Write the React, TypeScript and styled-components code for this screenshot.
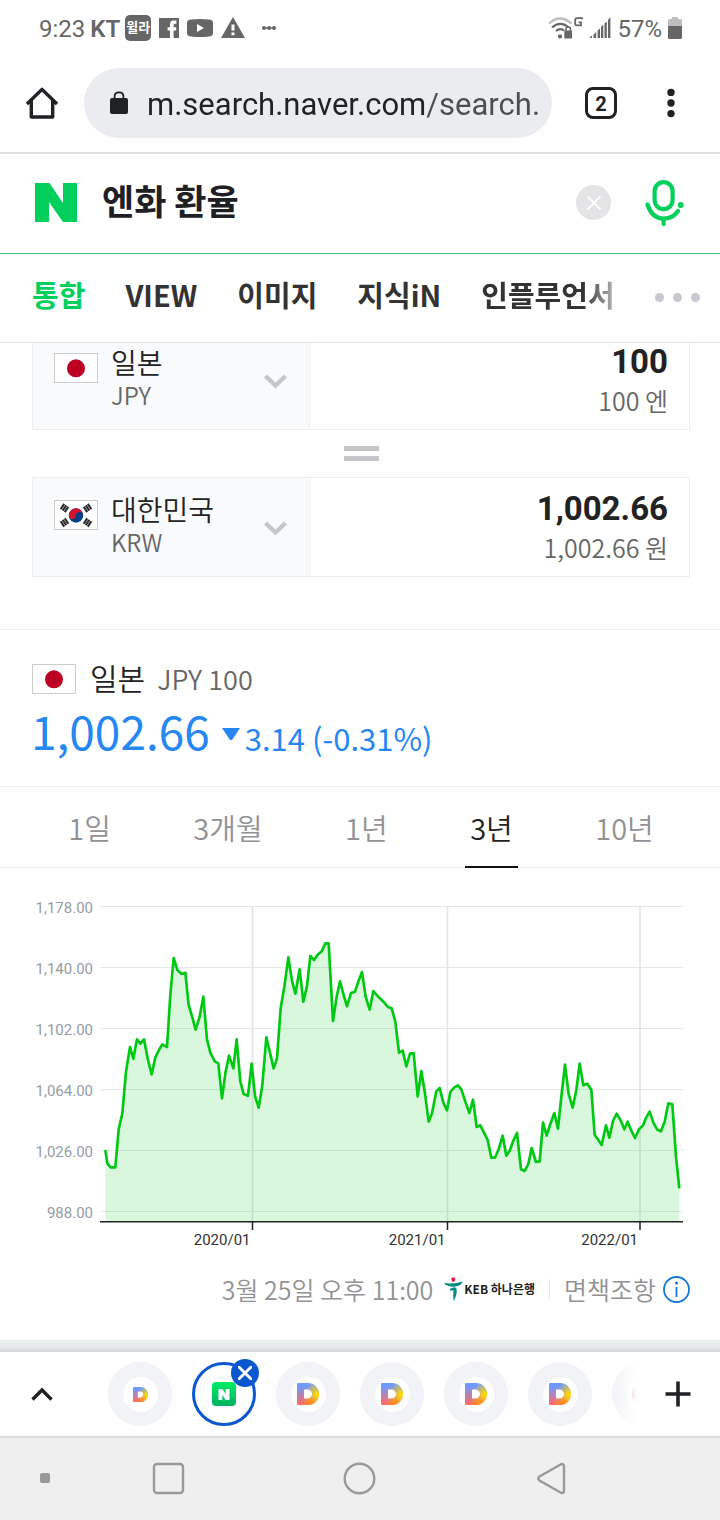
import React, { useState } from "react";
import styled, { createGlobalStyle, css } from "styled-components";

const GlobalStyle = createGlobalStyle`
  * { box-sizing: border-box; }
  body { margin: 0; background: #fff; }
  button, input, select { font: inherit; color: inherit; margin: 0; padding: 0; border: 0; background: none; outline: none; }
  button { display: flex; align-items: center; justify-content: center; cursor: pointer; }
  svg { display: block; flex: none; }
  a { color: inherit; text-decoration: none; }
`;

const kr = `"Noto Sans CJK KR", sans-serif`;
const roboto = `Roboto, "Noto Sans CJK KR", sans-serif`;

const Page = styled.div`
  display: flex;
  flex-direction: column;
  min-height: 100vh;
  overflow: hidden;
  font-family: ${kr};
  color: #222;
`;

/* ---------- system status bar ---------- */

const StatusBar = styled.header`
  display: flex;
  align-items: center;
  justify-content: space-between;
  height: 56px;
  padding: 0 38px 0 39px;
  font: 400 24px/28px ${roboto};
  color: #666;
`;

const StatusGroup = styled.div<{ $gap: number }>`
  display: flex;
  align-items: center;
  gap: ${(p) => p.$gap}px;
`;

const StatusText = styled.span<{ $bold?: boolean }>`
  padding-top: 2px;
  font-weight: ${(p) => (p.$bold ? 600 : 400)};
`;

const AppBadge = styled.span`
  width: 26px;
  height: 26px;
  border-radius: 5px;
  background: #666;
  color: #fff;
  font: 700 13px/24px ${kr};
  text-align: center;
  white-space: nowrap;
`;

/* ---------- browser bar ---------- */

const BrowserBar = styled.div`
  display: flex;
  align-items: center;
  height: 98px;
  padding: 12px 14px 14px 0;
  border-bottom: 2px solid #e0e0e0;
`;

const BarButton = styled.button<{ $width: number }>`
  flex: none;
  width: ${(p) => p.$width}px;
  height: 70px;
`;

const Omnibox = styled.label`
  flex: 1;
  min-width: 0;
  display: flex;
  align-items: center;
  gap: 19px;
  height: 70px;
  margin-right: 14px;
  padding: 0 10px 0 26px;
  border-radius: 35px;
  background: #ebecf0;
`;

const UrlInput = styled.input`
  flex: 1;
  min-width: 0;
  height: 46px;
  padding-top: 2px;
  font: 400 31px/42px ${roboto};
  color: transparent;
  background: linear-gradient(90deg, #202124 279px, #4c4d50 279px);
  background-clip: text;
  -webkit-background-clip: text;
`;

const TabCount = styled.span`
  display: block;
  width: 32px;
  height: 32px;
  border: 3px solid #202124;
  border-radius: 8px;
  font: 700 20px/28px ${roboto};
  color: #202124;
`;

/* ---------- search header ---------- */

const SearchForm = styled.form`
  display: flex;
  align-items: center;
  height: 100px;
  padding: 0 36px 2px 35px;
  border-bottom: 1px solid #2fcb78;
`;

const QueryInput = styled.input`
  flex: 1;
  min-width: 0;
  height: 54px;
  margin-left: 25px;
  padding-bottom: 6px;
  font: 700 35px/48px ${kr};
  color: #202024;
`;

const ClearButton = styled.button`
  width: 35px;
  height: 35px;
  margin-right: 34px;
  border-radius: 50%;
  background: #e4e4e6;
`;

const SearchTabs = styled.nav`
  display: flex;
  align-items: center;
  height: 89px;
  padding: 0 20px 8px 32px;
  border-bottom: 1px solid #dfe2e6;
  font: 700 29px/40px ${kr};
  color: #333;
`;

const TabList = styled.div`
  flex: 1;
  min-width: 0;
  display: flex;
  gap: 40px;
  overflow: hidden;
  white-space: nowrap;
`;

const SearchTab = styled.a<{ $active?: boolean; $fading?: boolean }>`
  ${(p) => p.$active && css`color: #03cf5d;`}
  ${(p) =>
    p.$fading &&
    css`
      mask-image: linear-gradient(90deg, #000 76%, rgba(0, 0, 0, 0.35));
    `}
`;

const MoreButton = styled.button`
  gap: 9px;
  height: 40px;
  padding-top: 6px;
`;

const Dot = styled.span`
  width: 9px;
  height: 9px;
  border-radius: 50%;
  background: #c6c9cf;
`;

/* ---------- converter ---------- */

const Content = styled.main`
  flex: 1;
  overflow: hidden;
`;

const Converter = styled.section`
  margin-top: -13px;
  padding: 0 30px 52px 32px;
`;

const CurrencyBox = styled.div`
  display: flex;
  height: 100px;
  border: 1px solid #eceef0;
`;

const Picker = styled.label`
  flex: 0 0 277px;
  display: flex;
  align-items: center;
  padding: 0 22px 0 21px;
  border-right: 1px solid #f0f1f3;
  background: #f9fafc;
`;

const PickerText = styled.span`
  flex: 1;
  min-width: 0;
  margin-left: 13px;
  padding-bottom: 4px;
`;

const CountrySelect = styled.select`
  display: block;
  appearance: none;
  width: 100%;
  height: 34px;
  font: 350 28px/34px ${kr};
  color: #222;
`;

const Code = styled.span`
  display: block;
  font: 350 24px/32px ${kr};
  color: #666;
`;

const FlagFrame = styled.span<{ $raised?: boolean }>`
  flex: none;
  width: 44px;
  height: 30px;
  border: 1px solid #ccc;
  background: #fff;
  ${(p) => p.$raised && css`margin-bottom: 24px;`}
`;

const ChevronHolder = styled.span`
  margin-top: 2px;
`;

const Amount = styled.div`
  flex: 1;
  min-width: 0;
  display: flex;
  flex-direction: column;
  justify-content: center;
  padding: 0 21px;
  text-align: right;
`;

const AmountInput = styled.input`
  width: 100%;
  height: 40px;
  font: 700 33px/40px ${roboto};
  text-align: right;
`;

const AmountUnit = styled.span`
  font: 350 25px/36px ${kr};
  color: #666;
`;

const EqualsSign = styled.div`
  display: flex;
  flex-direction: column;
  align-items: center;
  justify-content: center;
  gap: 5px;
  height: 47px;

  &::before,
  &::after {
    content: "";
    width: 35px;
    height: 5px;
    background: #c5c6c9;
  }
`;

/* ---------- quote ---------- */

const Quote = styled.section`
  height: 157px;
  padding: 28px 31px 0;
  border-top: 1px solid #eceef0;
`;

const QuoteTitle = styled.h2`
  display: flex;
  align-items: center;
  height: 42px;
  margin: 0 1px;
  font: 350 30px/38px ${kr};
  color: #222;
`;

const QuoteName = styled.span`
  margin: -4px 0 0 14px;
`;

const QuoteCode = styled.span`
  margin-left: 12px;
  font-size: 27px;
  color: #666;
`;

const QuotePrice = styled.p`
  display: flex;
  align-items: baseline;
  margin: 0;
  font: 400 46px/60px ${kr};
  color: #2787f2;
`;

const QuoteChange = styled.span`
  display: flex;
  align-items: center;
  gap: 5px;
  margin-left: 12px;
  font: 400 31px/40px ${kr};
`;

/* ---------- range tabs ---------- */

const Ranges = styled.div`
  display: flex;
  justify-content: space-around;
  height: 82px;
  padding: 0 25px 0 27px;
  border-top: 1px solid #eceef0;
  border-bottom: 1px solid #eceef0;
`;

const RangeButton = styled.button<{ $active: boolean }>`
  height: 81px;
  padding: 0 5px;
  border-bottom: 2px solid ${(p) => (p.$active ? "#111" : "transparent")};
  font: 350 29px/40px ${kr};
  color: ${(p) => (p.$active ? "#222" : "#929294")};
`;

/* ---------- chart ---------- */

const ChartSvg = styled.svg`
  width: 100%;
  height: auto;
  margin-top: 22px;
  font: 400 15px ${roboto};
`;

const Source = styled.footer`
  display: flex;
  align-items: center;
  justify-content: flex-end;
  height: 84px;
  padding: 0 30px 18px 0;
  font: 350 25px/36px ${kr};
  color: #929294;
`;

const Bank = styled.a`
  display: flex;
  align-items: center;
  gap: 1px;
  margin-left: 11px;
  padding-right: 14px;
  font: 700 12px/20px ${kr};
  color: #222;
`;

const Disclaimer = styled.a`
  display: flex;
  align-items: center;
  gap: 7px;
`;

const Divider = styled.span`
  width: 1px;
  height: 20px;
  margin-right: 14px;
  background: #e8e8ea;
`;

const Shade = styled.div`
  height: 12px;
  border-top: 1px solid #e6ebed;
  background: linear-gradient(#eff3f4, #e4e8ea 60%, #d3d5d7);
`;

/* ---------- bottom tab strip ---------- */

const TabStrip = styled.div`
  display: flex;
  height: 86px;
  border-bottom: 2px solid #dedede;
  background: #fff;
`;

const StripButton = styled.button`
  flex: none;
  width: 84px;
  height: 84px;
`;

const Favicons = styled.div`
  flex: 1;
  min-width: 0;
  display: flex;
  align-items: center;
  gap: 20px;
  padding-left: 24px;
  overflow: hidden;
  mask-image: linear-gradient(90deg, #000 calc(100% - 24px), transparent);
`;

const Favicon = styled.button<{ $active?: boolean }>`
  position: relative;
  flex: none;
  width: 64px;
  height: 64px;
  border-radius: 50%;
  background: ${(p) => (p.$active ? "#fff" : "#f1f3f6")};
  ${(p) => p.$active && css`border: 3px solid #0b57d0;`}
`;

const Disc = styled.span`
  display: flex;
  align-items: center;
  justify-content: center;
  width: 35px;
  height: 35px;
  border-radius: 50%;
  background: #fff;
`;

const CloseBadge = styled.span`
  position: absolute;
  top: -6px;
  right: -6px;
  display: flex;
  align-items: center;
  justify-content: center;
  width: 28px;
  height: 28px;
  border-radius: 50%;
  background: #0b57d0;
`;

const NavBar = styled.nav`
  display: grid;
  grid-template-columns: 73px 1fr 1fr 1fr 73px;
  align-items: center;
  height: 82px;
  padding-bottom: 2px;
  background: #efefef;
`;

const NavDot = styled.span`
  justify-self: center;
  width: 10px;
  height: 10px;
  margin-left: 17px;
  border-radius: 2px;
  background: #999;
`;

/* ---------- drawings ---------- */

const JapanFlag = () => (
  <svg width="42" height="28" viewBox="0 0 42 28">
    <circle cx="21" cy="14.3" r="9" fill="#bc0024" />
  </svg>
);

const KoreaFlag = () => {
  const bars = (x: number, y: number, angle: number) => (
    <g transform={`translate(${x} ${y}) rotate(${angle})`} stroke="#2b2b2b" strokeWidth="2.1">
      <path d="M-3.2 -2.5H3.2M-3.2 0H3.2M-3.2 2.5H3.2" />
    </g>
  );
  return (
    <svg width="42" height="28" viewBox="0 0 42 28">
      {bars(9.5, 7, -56)}
      {bars(32.5, 7, 56)}
      {bars(9.5, 21.5, 56)}
      {bars(32.5, 21.5, -56)}
      <circle cx="21" cy="14.5" r="7.2" fill="#003f87" />
      <path d="M13.8 14.5a7.2 7.2 0 0 1 14.4 0a3.6 3.6 0 0 0 -7.2 0a3.6 3.6 0 0 1 -7.2 0z" fill="#d0142c" />
    </svg>
  );
};

const Cross = ({ size, width }: { size: number; width: number }) => (
  <svg width={size} height={size} viewBox="0 0 12 12" fill="none" stroke="#fff" strokeWidth={width} strokeLinecap="round">
    <path d="M1 1L11 11M11 1L1 11" />
  </svg>
);

const PickerChevron = () => (
  <svg width="23" height="15" viewBox="0 0 23 15" fill="none" stroke="#c5c6c9" strokeWidth="4.4">
    <path d="M1.5 2L11.5 11.5L21.5 2" />
  </svg>
);

const DLogo = ({ size, id }: { size: number; id: string }) => (
  <svg width={size} height={size} viewBox="0 0 22 22">
    <defs>
      <linearGradient id={`${id}-base`} x1="0" y1="0" x2="0" y2="1">
        <stop offset="0.15" stopColor="#6e9bff" />
        <stop offset="0.95" stopColor="#ff6a66" />
      </linearGradient>
      <radialGradient id={`${id}-sun`} gradientUnits="userSpaceOnUse" cx="22" cy="12" r="15">
        <stop offset="0.1" stopColor="#ffe000" />
        <stop offset="1" stopColor="#ffe000" stopOpacity="0" />
      </radialGradient>
      <radialGradient id={`${id}-glow`} gradientUnits="userSpaceOnUse" cx="14" cy="22" r="10">
        <stop offset="0" stopColor="#ff8a12" />
        <stop offset="1" stopColor="#ff9a12" stopOpacity="0" />
      </radialGradient>
    </defs>
    {["base", "sun", "glow"].map((layer) => (
      <path
        key={layer}
        fill={`url(#${id}-${layer})`}
        fillRule="evenodd"
        d="M1 0H11A11 11 0 0 1 11 22H1A1 1 0 0 1 0 21V1A1 1 0 0 1 1 0ZM7 6.6V15.6H10.6A4.5 4.5 0 0 0 10.6 6.6Z"
      />
    ))}
  </svg>
);

/* Trend outline, three units per chart pixel. */
const trend: number[][] = [
  [316, 780], [322, 820], [332, 832], [346, 832], [356, 718], [367, 670], [378, 545], [390, 471], [400, 506],
  [411, 448], [421, 461], [432, 448], [444, 510], [455, 553], [466, 502], [477, 480], [487, 463], [501, 471],
  [511, 315], [521, 204], [532, 240], [545, 252], [556, 248], [566, 345], [577, 382], [587, 419], [599, 380],
  [610, 320], [621, 448], [631, 488], [645, 515], [655, 520], [666, 625], [676, 550], [687, 497], [700, 535],
  [710, 448], [721, 575], [731, 612], [744, 617], [755, 521], [765, 618], [776, 653], [787, 585], [799, 442],
  [810, 488], [821, 535], [831, 505], [842, 355], [853, 290], [865, 202], [876, 272], [886, 311], [899, 238],
  [910, 335], [921, 288], [931, 198], [942, 210], [953, 194], [965, 184], [976, 160], [986, 160], [999, 393],
  [1010, 320], [1020, 274], [1031, 315], [1041, 349], [1053, 309], [1065, 305], [1076, 272], [1086, 246],
  [1097, 320], [1109, 359], [1120, 303], [1131, 316], [1142, 327], [1153, 338], [1164, 351], [1175, 355],
  [1186, 395], [1197, 488], [1208, 482], [1219, 529], [1230, 491], [1241, 489], [1253, 619], [1264, 543],
  [1275, 610], [1286, 695], [1296, 670], [1309, 604], [1319, 594], [1330, 638], [1341, 661], [1351, 606],
  [1363, 592], [1374, 586], [1384, 598], [1396, 635], [1408, 669], [1419, 629], [1430, 711], [1441, 706],
  [1452, 728], [1463, 750], [1474, 803], [1485, 803], [1496, 778], [1508, 737], [1519, 797], [1529, 782],
  [1540, 752], [1551, 729], [1563, 838], [1574, 843], [1585, 822], [1595, 774], [1608, 816], [1619, 814],
  [1629, 698], [1640, 737], [1651, 702], [1663, 669], [1674, 716], [1684, 620], [1695, 524], [1706, 612],
  [1718, 653], [1729, 600], [1739, 521], [1750, 586], [1762, 581], [1774, 599], [1784, 734], [1795, 750],
  [1805, 765], [1818, 706], [1828, 743], [1839, 693], [1850, 671], [1862, 691], [1873, 718], [1883, 695],
  [1894, 722], [1905, 744], [1917, 718], [1929, 706], [1939, 682], [1949, 665], [1961, 700], [1972, 719],
  [1983, 724], [1994, 695], [2005, 640], [2017, 643], [2028, 800], [2038, 895],
];

const levels = ["1,178.00", "1,140.00", "1,102.00", "1,064.00", "1,026.00", "988.00"];
const years = [
  { x: 252.5, label: "2020/01" },
  { x: 447.5, label: "2021/01" },
  { x: 640, label: "2022/01" },
];

const RateChart = () => {
  const line = trend.map((p) => p.join(",")).join(" ");
  return (
    <ChartSvg viewBox="0 0 720 366" role="img" aria-label="일본 JPY 환율 3년">
      {levels.map((label, i) => (
        <g key={label}>
          <path d={`M100 ${16.5 + i * 61}H683`} stroke="#e5e7ec" />
          <text x="93" y={23 + i * 61} textAnchor="end" fill="#959ca8">
            {label}
          </text>
        </g>
      ))}
      {years.map(({ x, label }) => (
        <g key={label}>
          <path d={`M${x} 16V331`} stroke="#e2e4e9" strokeWidth="1.6" />
          <text x={x - 2} y="355" textAnchor="end" fill="#333">
            {label}
          </text>
        </g>
      ))}
      <svg width="720" height="366" viewBox="0 0 2160 1098">
        <polygon points={`316,994 ${line} 2038,994`} fill="#00c813" fillOpacity="0.15" />
        <polyline points={line} fill="none" stroke="#00c813" strokeWidth="8" strokeLinejoin="round" />
      </svg>
      <path d="M100 331.8H683" stroke="#222" strokeWidth="1.6" />
      {years.map(({ x }) => (
        <path key={x} d={`M${x} 332V340`} stroke="#222" strokeWidth="1.5" />
      ))}
    </ChartSvg>
  );
};

const StatusIcons = () => (
  <>
    <svg width="20" height="20" viewBox="0 0 20 20">
      <path fill="#666" fillRule="evenodd" d="M0 0H20V20H14.6V12.6H17.2V9.2H14.6V7.2Q14.6 5.8 16 5.8H17.4V2.6H14.6Q11 2.8 11 6.6V9.2H8.6V12.6H11V20H0Z" />
    </svg>
    <svg width="26" height="18" viewBox="0 0 26 18">
      <path fill="#666" fillRule="evenodd" d="M4 .5Q13-.5 22 .5Q26 .8 26 4V14Q26 17.2 22 17.5Q13 18.5 4 17.5Q0 17.2 0 14V4Q0 .8 4 .5ZM10 5V13L17 9Z" />
    </svg>
    <svg width="24" height="23" viewBox="0 0 24 23">
      <path fill="#666" fillRule="evenodd" d="M12 0L24 21H0ZM10.5 7.5V13.5H13.5V7.5ZM10.5 15.5V18.3H13.5V15.5Z" />
    </svg>
  </>
);

const WifiIcon = () => (
  <svg width="35" height="24" viewBox="0 0 35 24" fill="none" stroke="#666" strokeWidth="2.2">
    <path d="M1 7.5Q12-2.5 23.5 7.5" stroke="#bdbdbd" />
    <path d="M4 11.5Q12 4.5 20.5 11" />
    <path d="M8 15Q12 11.5 16 14.5" />
    <circle cx="12" cy="20.4" r="2.1" fill="#666" stroke="none" />
    <path d="M16.3 14.5H24V22.5H16.3Z" fill="#666" stroke="none" />
    <path d="M18 15V12.8Q18 11 20.2 11T22.4 12.8V15" strokeWidth="1.5" />
    <path d="M34 3.2V2.2H28.8Q27.2 2.2 27.2 3.8V7.8Q27.2 9.4 28.8 9.4H33V6.4H30.6" strokeWidth="1.8" />
  </svg>
);

const SignalIcon = () => (
  <svg width="22" height="22" viewBox="0 0 22 22" fill="#666">
    <path d="M0 21L3 18.6V21ZM4.6 17.4L7.2 15V21H4.6ZM8.6 13.6L11 11.4V21H8.6ZM12 10L14.3 7.7V21H12ZM15.5 6.6L17.8 4.4V21H15.5ZM19 3L21.4 0V21H19Z" />
  </svg>
);

const BatteryIcon = () => (
  <svg width="14" height="22" viewBox="0 0 14 22">
    <path d="M4 0H10V2H12.5Q14 2 14 3.5V9H0V3.5Q0 2 1.5 2H4Z" fill="#bdbdbd" />
    <path d="M0 9H14V20.5Q14 22 12.5 22H1.5Q0 22 0 20.5Z" fill="#666" />
  </svg>
);

/* ---------- page ---------- */

const ranges = ["1일", "3개월", "1년", "3년", "10년"];

interface CurrencyProps {
  country: string;
  code: string;
  value: string;
  unit: string;
  flag: React.ReactNode;
}

const CurrencyRow = ({ country, code, value, unit, flag }: CurrencyProps) => (
  <CurrencyBox>
    <Picker>
      <FlagFrame $raised>{flag}</FlagFrame>
      <PickerText>
        <CountrySelect aria-label={`${country} ${code}`} defaultValue={country}>
          <option>{country}</option>
        </CountrySelect>
        <Code>{code}</Code>
      </PickerText>
      <ChevronHolder>
        <PickerChevron />
      </ChevronHolder>
    </Picker>
    <Amount>
      <AmountInput aria-label={`${code} 금액`} defaultValue={value} />
      <AmountUnit>{unit}</AmountUnit>
    </Amount>
  </CurrencyBox>
);

const NavButton = ({ label, children }: { label: string; children: React.ReactNode }) => (
  <button aria-label={label}>
    <svg width="33" height="33" viewBox="0 0 33 33" fill="none" stroke="#999" strokeWidth="2.4">
      {children}
    </svg>
  </button>
);

export default function App() {
  const [range, setRange] = useState("3년");

  return (
    <Page>
      <GlobalStyle />
      <StatusBar>
        <StatusGroup $gap={8}>
          <StatusGroup $gap={5}>
            <StatusText>9:23</StatusText>
            <StatusText $bold>KT</StatusText>
            <AppBadge>윌라</AppBadge>
          </StatusGroup>
          <StatusIcons />
          <svg width="32" height="6" viewBox="0 0 32 6" fill="#666">
            <path d="M11 3H21" stroke="#666" strokeWidth="1.5" />
            <circle cx="11" cy="3" r="2" />
            <circle cx="16" cy="3" r="2" />
            <circle cx="21" cy="3" r="2" />
          </svg>
        </StatusGroup>
        <StatusGroup $gap={6}>
          <WifiIcon />
          <SignalIcon />
          <StatusText>57%</StatusText>
          <BatteryIcon />
        </StatusGroup>
      </StatusBar>

      <BrowserBar>
        <BarButton $width={84} aria-label="홈">
          <svg width="32" height="32" viewBox="0 0 32 32" fill="none" stroke="#202124" strokeWidth="3.4" strokeLinejoin="round">
            <path d="M1 17L16 2.4L31 17M5.3 13.5V30H26.7V13.5" />
          </svg>
        </BarButton>
        <Omnibox>
          <svg width="18" height="24" viewBox="0 0 18 24">
            <path d="M4.6 9V5.6Q4.6 1.4 9 1.4T13.4 5.6V9" fill="none" stroke="#202124" strokeWidth="1.8" />
            <rect y="7" width="18" height="16" rx="2" fill="#202124" />
          </svg>
          <UrlInput aria-label="주소" defaultValue="m.search.naver.com/search." />
        </Omnibox>
        <BarButton $width={70} aria-label="탭">
          <TabCount>2</TabCount>
        </BarButton>
        <BarButton $width={70} aria-label="메뉴">
          <svg width="8" height="30" viewBox="0 0 8 30" fill="#202124">
            <circle cx="4" cy="4.4" r="3.7" />
            <circle cx="4" cy="15" r="3.7" />
            <circle cx="4" cy="25.6" r="3.7" />
          </svg>
        </BarButton>
      </BrowserBar>

      <SearchForm onSubmit={(e) => e.preventDefault()}>
        <svg width="42" height="39" viewBox="0 0 42 39">
          <path d="M0 0H14.5L28 20V0H42V39H28L14 19V39H0Z" fill="#03cf5d" />
        </svg>
        <QueryInput aria-label="검색어" defaultValue="엔화 환율" />
        <ClearButton type="button" aria-label="지우기">
          <Cross size={14} width={1.7} />
        </ClearButton>
        <button type="button" aria-label="음성 검색">
          <svg width="39" height="46" viewBox="0 0 39 46" fill="none" stroke="#03cf5d" strokeWidth="4.2" strokeLinecap="round">
            <rect x="9.6" y="2.1" width="18" height="27" rx="9" />
            <path d="M2.5 24.5Q7 38.5 18.5 38.5Q28 38.5 33 31M18.6 39V44" />
            <circle cx="35.7" cy="25" r="3" fill="#03cf5d" stroke="none" />
          </svg>
        </button>
      </SearchForm>

      <SearchTabs>
        <TabList>
          <SearchTab href="#all" $active>통합</SearchTab>
          <SearchTab href="#view">VIEW</SearchTab>
          <SearchTab href="#image">이미지</SearchTab>
          <SearchTab href="#kin">지식iN</SearchTab>
          <SearchTab href="#influencer" $fading>인플루언서</SearchTab>
        </TabList>
        <MoreButton aria-label="더보기">
          <Dot />
          <Dot />
          <Dot />
        </MoreButton>
      </SearchTabs>

      <Content>
        <Converter>
          <CurrencyRow country="일본" code="JPY" value="100" unit="100 엔" flag={<JapanFlag />} />
          <EqualsSign />
          <CurrencyRow country="대한민국" code="KRW" value="1,002.66" unit="1,002.66 원" flag={<KoreaFlag />} />
        </Converter>

        <Quote>
          <QuoteTitle>
            <FlagFrame>
              <JapanFlag />
            </FlagFrame>
            <QuoteName>일본</QuoteName>
            <QuoteCode>JPY 100</QuoteCode>
          </QuoteTitle>
          <QuotePrice>
            1,002.66
            <QuoteChange>
              <svg width="18" height="24" viewBox="0 0 18 24">
                <path d="M0 2H18L10.5 13.2Q9 15 7.5 13.2Z" fill="#2787f2" />
              </svg>
              3.14 (-0.31%)
            </QuoteChange>
          </QuotePrice>
        </Quote>

        <Ranges>
          {ranges.map((r) => (
            <RangeButton key={r} $active={r === range} onClick={() => setRange(r)}>
              {r}
            </RangeButton>
          ))}
        </Ranges>

        <RateChart />

        <Source>
          <span>3월 25일 오후 11:00</span>
          <Bank href="#bank">
            <svg width="19" height="25" viewBox="0 0 19 25">
              <ellipse cx="9.3" cy="2.6" rx="1.9" ry="2.4" fill="#e5173f" />
              <path d="M0 6Q9 7.4 19 4.6Q16 9.8 10 9.8Q3 9.8 0 6Z" fill="#008c80" />
              <path d="M6 12Q12.5 8 12.8 13Q12.8 18 9.8 24.5Q8.8 18 9.6 14.5Q9.8 12.6 6 13.8Z" fill="#008c80" />
            </svg>
            <span>KEB 하나은행</span>
          </Bank>
          <Divider />
          <Disclaimer href="#disclaimer">
            면책조항
            <svg width="27" height="27" viewBox="0 0 27 27" fill="none" stroke="#1478d8" strokeWidth="1.8">
              <circle cx="13.5" cy="13.5" r="12.5" />
              <path d="M13.5 11V21" />
              <circle cx="13.5" cy="7" r="1.5" fill="#1478d8" stroke="none" />
            </svg>
          </Disclaimer>
        </Source>
      </Content>

      <Shade />
      <TabStrip>
        <StripButton aria-label="펼치기">
          <svg width="22" height="14" viewBox="0 0 22 14" fill="none" stroke="#202124" strokeWidth="3.4">
            <path d="M1.5 12.5L11 3L20.5 12.5" />
          </svg>
        </StripButton>
        <Favicons>
          <Favicon aria-label="탭 1">
            <Disc>
              <DLogo size={15} id="d1" />
            </Disc>
          </Favicon>
          <Favicon $active aria-label="탭 2">
            <svg width="24" height="24" viewBox="0 0 24 24">
              <defs>
                <linearGradient id="naver" x1="0" y1="0" x2="0" y2="1">
                  <stop offset="0" stopColor="#00ee64" />
                  <stop offset="1" stopColor="#03b164" />
                </linearGradient>
              </defs>
              <rect width="24" height="24" rx="4" fill="url(#naver)" />
              <path d="M6.5 7H10.3L13.7 12V7H17.5V18H13.7L10.3 13V18H6.5Z" fill="#fff" />
            </svg>
            <CloseBadge>
              <Cross size={14} width={2.4} />
            </CloseBadge>
          </Favicon>
          {["d3", "d4", "d5", "d6"].map((id) => (
            <Favicon key={id} aria-label="탭">
              <Disc>
                <DLogo size={22} id={id} />
              </Disc>
            </Favicon>
          ))}
          <Favicon aria-label="탭 7">
            <Disc>
              <svg width="25" height="25" viewBox="0 0 25 25">
                <circle cx="12.5" cy="12.5" r="12.5" fill="#f0304a" />
              </svg>
            </Disc>
          </Favicon>
        </Favicons>
        <StripButton aria-label="새 탭">
          <svg width="26" height="26" viewBox="0 0 26 26" stroke="#202124" strokeWidth="3.6">
            <path d="M13 .5V25.5M.5 13H25.5" />
          </svg>
        </StripButton>
      </TabStrip>

      <NavBar>
        <NavDot />
        <NavButton label="최근 앱">
          <rect x="2" y="2" width="29" height="29" rx="3" />
        </NavButton>
        <NavButton label="홈">
          <circle cx="16.5" cy="16.5" r="14.8" />
        </NavButton>
        <NavButton label="뒤로">
          <path d="M4.5 14.5L25.5 2.5Q29 1 29 4.5V28.5Q29 32 25.5 30.5L4.5 18.5Q2 16.5 4.5 14.5Z" />
        </NavButton>
      </NavBar>
    </Page>
  );
}
